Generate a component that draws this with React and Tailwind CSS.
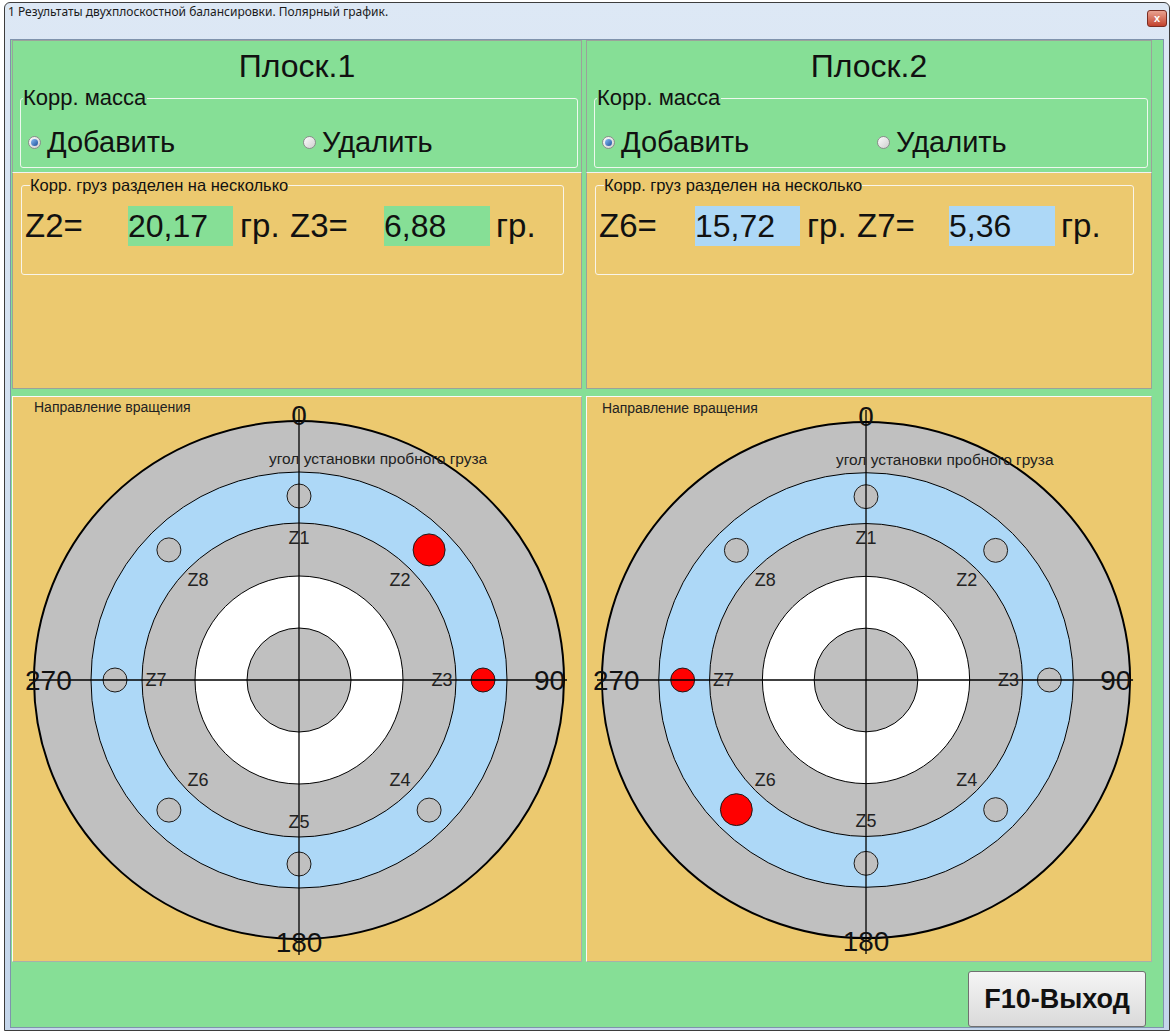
import React from 'react';

const ANGLES = [0, 45, 90, 135, 180, 225, 270, 315];

function Radio({ checked }) {
    return (
        <span className="inline-flex items-center justify-center w-[13px] h-[13px] rounded-full border border-[#8c8c8c] bg-gradient-to-br from-[#fdfdfd] to-[#cfcfcf]">
            {checked && <span className="w-[7px] h-[7px] rounded-full bg-gradient-to-br from-[#8cc0f5] to-[#1d4f9c]" />}
        </span>
    );
}

// полярный график, цвета маркеров передаются снаружи
function Polar({ marks, cx }) {
    const cy = 283;
    const pts = ANGLES.map((a) => {
        const t = (a * Math.PI) / 180;
        return {
            x: cx + 184 * Math.sin(t),
            y: cy - 184 * Math.cos(t),
            lx: cx + 143 * Math.sin(t),
            ly: cy - 142 * Math.cos(t),
        };
    });

    return (
        <svg viewBox="0 0 566 564" width="566" height="564" className="block">
            <ellipse cx={cx} cy={cy} rx="265" ry="259" fill="#c0c0c0" stroke="#000" strokeWidth="2" />
            <circle cx={cx} cy={cy} r="208" fill="#add8f7" stroke="#000" strokeWidth="1" />
            <circle cx={cx} cy={cy} r="157" fill="#c0c0c0" stroke="#000" strokeWidth="1" />
            <circle cx={cx} cy={cy} r="104" fill="#fff" stroke="#000" strokeWidth="1" />
            <circle cx={cx} cy={cy} r="52" fill="#c0c0c0" stroke="#000" strokeWidth="1" />

            {pts.map((p, i) => {
                const m = marks[i];
                return (
                    <circle
                        key={i}
                        cx={p.x}
                        cy={p.y}
                        r={m === 'big' ? 16 : 12}
                        fill={m ? '#ff0000' : '#c0c0c0'}
                        stroke="#1a1a1a"
                        strokeWidth="1"
                    />
                );
            })}

            <line x1={cx} y1="12" x2={cx} y2="558" stroke="#000" strokeWidth="1.3" />
            <line x1={cx - 270} y1={cy} x2={cx + 268} y2={cy} stroke="#000" strokeWidth="1.3" />

            <g fontFamily="'Liberation Sans', Arial, sans-serif" fill="#222">
                {pts.map((p, i) => (
                    <text key={i} x={p.lx} y={p.ly + 6} fontSize="18" textAnchor="middle">
                        Z{i + 1}
                    </text>
                ))}
                <text x={cx - 265} y="15" fontSize="14">Направление вращения</text>
                <text x={cx - 30} y="67" fontSize="15.5">угол установки пробного  груза</text>
            </g>
            <g fontFamily="'Liberation Sans', Arial, sans-serif" fill="#111" fontSize="28">
                <text x={cx} y="28" textAnchor="middle">0</text>
                <text x={cx} y="555" textAnchor="middle">180</text>
                <text x={cx - 274} y={cy + 10}>270</text>
                <text x={cx + 235} y={cy + 10}>90</text>
            </g>
        </svg>
    );
}

function Column({ title, width, a, av, b, bv, aw, bw, boxBg, marks, cx }) {
    return (
        <div className="flex flex-col" style={{ width }}>
            <div className="border border-[#9aa39a] border-b-0 bg-[#86df96] h-[132px] flex flex-col">
                <div className="text-[32px] leading-[36px] text-center text-[#111] pt-[7px]">{title}</div>
                <fieldset className="ml-[7px] mr-[3px] mt-[2px] px-0 border border-[#eef8ee] rounded-[3px] h-[82px]">
                    <legend className="text-[22px] leading-[24px] ml-[2px] pr-[1px] text-[#111]">Корр. масса</legend>
                    <div className="flex items-center pt-[16px] text-[29px] leading-[32px] text-[#111]">
                        <div className="flex items-center gap-[6px] pl-[7px] w-[282px]">
                            <Radio checked />
                            <span>Добавить</span>
                        </div>
                        <div className="flex items-center gap-[6px]">
                            <Radio />
                            <span>Удалить</span>
                        </div>
                    </div>
                </fieldset>
            </div>
            <div className="border border-[#9aa39a] border-t-[#f3f3f3] bg-[#ecc96f] h-[217px] pt-[3px]">
                <fieldset className="ml-[8px] mr-[17px] px-0 border border-[#f8f4ea] rounded-[3px] h-[99px]">
                    <legend className="text-[16.5px] leading-[18px] ml-[8px] text-[#111]">Корр. груз разделен на несколько</legend>
                    <div className="flex items-center pl-[3px] pt-[12px] text-[33px] leading-[40px] text-[#111]">
                        <span style={{ width: aw }}>{a}</span>
                        <span className={`w-[105px] h-[40px] text-[32px] ${boxBg}`}>{av}</span>
                        <span className="w-[57px] pl-[7px]">гр.</span>
                        <span style={{ width: bw }}>{b}</span>
                        <span className={`w-[106px] h-[40px] text-[32px] ${boxBg}`}>{bv}</span>
                        <span className="pl-[6px]">гр.</span>
                    </div>
                </fieldset>
            </div>
            <div className="h-[7px]" />
            <div className="border border-[#a9b0a9] border-t-[#fafafa] border-l-[#fafafa] bg-[#ecc96f] h-[566px] flex justify-center overflow-hidden">
                <Polar marks={marks} cx={cx} />
            </div>
        </div>
    );
}

export default function App() {
    return (
        <div className="w-[1173px] h-[1031px] bg-white overflow-hidden font-['Liberation_Sans',Arial,sans-serif]">
            <div className="ml-[4px] mt-[2px] w-[1166px] h-[1029px] border border-[#3d3d3d] rounded-t-[6px] bg-gradient-to-b from-[#dde8f5] to-[#c4d6eb] flex flex-col">
                {/* заголовок окна */}
                <div className="h-[41px] flex items-start justify-between pl-[3px] pr-[2px]">
                    <span className="text-[12px] leading-[16px] pt-[1px] text-[#1b1b1b] font-['Noto_Sans',sans-serif]">
                        1 Результаты двухплоскостной балансировки. Полярный график.
                    </span>
                    <span className="mt-[7px] w-[20px] h-[17px] rounded-[3px] border border-[#7a2d22] bg-gradient-to-b from-[#e8a190] to-[#c2412c] flex items-center justify-center text-white text-[11px] font-bold leading-none">
                        x
                    </span>
                </div>

                <div className="mx-[5px] mb-[2px] flex-1 border border-[#7f93ad] bg-[#86df96] flex flex-col">
                    <div className="flex gap-[4px] pl-[1px]">
                        <Column
                            title="Плоск.1"
                            width={570}
                            a="Z2="
                            av="20,17"
                            b="Z3="
                            bv="6,88"
                            aw={103}
                            bw={94}
                            boxBg="bg-[#86df96]"
                            cx={285}
                            marks={[null, 'big', 'small', null, null, null, null, null]}
                        />
                        <Column
                            title="Плоск.2"
                            width={566}
                            a="Z6="
                            av="15,72"
                            b="Z7="
                            bv="5,36"
                            aw={96}
                            bw={92}
                            boxBg="bg-[#add8f7]"
                            cx={280}
                            marks={[null, null, null, null, null, 'big', 'small', null]}
                        />
                    </div>
                    <div className="flex-1 flex justify-end items-start pt-[9px] pr-[17px]">
                        <button className="w-[178px] h-[56px] rounded-[3px] border border-[#707070] bg-gradient-to-b from-[#f5f5f5] to-[#dadada] text-[27px] font-bold text-[#111]">
                            F10-Выход
                        </button>
                    </div>
                </div>
            </div>
        </div>
    );
}
